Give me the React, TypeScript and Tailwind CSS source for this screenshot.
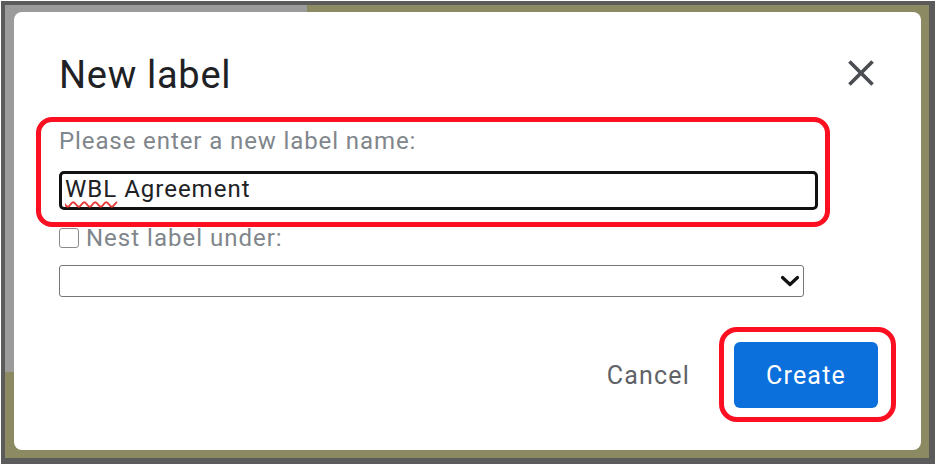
import React from "react";

export default function App() {
  return (
    <div className="w-[936px] h-[467px] bg-white pl-px pt-px font-['Roboto',sans-serif]">
      <div className="relative w-[934px] h-[463px] border-[#5b5b5b] border-l-4 border-t-4 border-r-[6px] border-b-[6px] bg-[#8c8a63] pl-[9px] pt-[7px]">
        <div className="absolute left-0 top-0 w-[302px] h-[367px] bg-[#9b9b9b]" />
        <div className="relative flex flex-col w-[907px] h-[438px] bg-white rounded-[8px] pl-[45px] pr-[43px] pt-[44px] pb-[42px]">
          {/* header */}
          <div className="flex justify-between items-start">
            <h1 className="text-[38px] leading-[38px] tracking-[0.7px] text-[#202124] font-normal">New label</h1>
            <svg
              className="-mt-[5px] -mr-[5px]"
              width="44"
              height="44"
              viewBox="0 0 24 24"
              fill="#4a4d51"
            >
              <path d="M19 6.41L17.59 5 12 10.59 6.41 5 5 6.41 10.59 12 5 17.59 6.41 19 12 13.41 17.59 19 19 17.59 13.41 12z" />
            </svg>
          </div>

          {/* label */}
          <div className="mt-[34px] text-[24px] leading-[24px] tracking-[0.9px] text-[#80868b]">
            Please enter a new label name:
          </div>

          {/* input */}
          <div className="mt-[18px] w-[759px] h-[39px] border-[3px] border-[#111] rounded-[5px] pl-[3px] pt-[3px] text-[24px] leading-[24px] tracking-[1px] text-[#202124]">
            <span className="underline decoration-wavy decoration-[#e53935] decoration-[1.5px] underline-offset-[4px]">WBL</span> Agreement
          </div>

          {/* checkbox row */}
          <div className="mt-[16px] flex items-center">
            <div className="w-[20px] h-[20px] border-[1.5px] border-[#8a8a8a] rounded-[3px] bg-white" />
            <span className="ml-[7px] text-[24px] leading-[24px] tracking-[1px] text-[#80868b]">Nest label under:</span>
          </div>

          {/* select */}
          <div className="mt-[15px] flex items-center justify-end w-[745px] h-[32px] border border-[#767676] rounded-[3px] pr-[3px]">
            <svg width="20" height="12" viewBox="0 0 20 12">
              <polyline points="2.5,2.5 10,9.5 17.5,2.5" fill="none" stroke="#111" strokeWidth="3.2" strokeLinecap="round" strokeLinejoin="round" />
            </svg>
          </div>

          {/* footer */}
          <div className="mt-auto flex justify-end items-center">
            <span className="mr-[44px] text-[25px] leading-[25px] tracking-[1.2px] text-[#5f6368]">Cancel</span>
            <div className="w-[144px] h-[66px] bg-[#0b6fdc] rounded-[6px] flex items-center justify-center text-[25px] leading-[25px] tracking-[1.2px] text-white">
              Create
            </div>
          </div>

          {/* annotations */}
          <div className="absolute left-[22px] top-[105px] w-[794px] h-[110px] border-[5px] border-[#fb0f21] rounded-[16px]" />
          <div className="absolute left-[705px] top-[315px] w-[177px] h-[95px] border-[5px] border-[#fb0f21] rounded-[18px]" />
        </div>
      </div>
    </div>
  );
}
